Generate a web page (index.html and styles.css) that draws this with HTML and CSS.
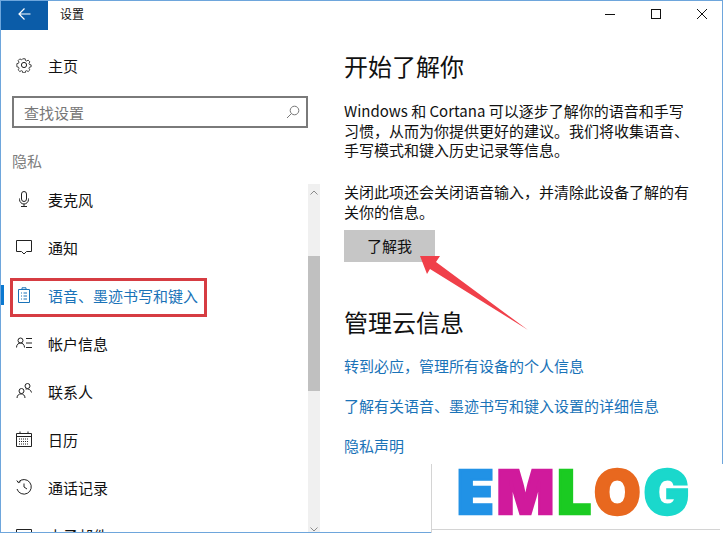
FILE: index.html
```html
<!DOCTYPE html>
<html lang="zh-CN">
<head>
    <meta charset="UTF-8">
    <title>设置</title>
    <link rel="stylesheet" href="styles.css">
</head>
<body>
    <div class="window">
        <div class="titlebar">
            <div class="back-btn">
                <svg width="16" height="14" viewBox="0 0 16 14"><path d="M13.5 7H2M7.5 1.5L2 7l5.5 5.5" fill="none" stroke="#fff" stroke-width="1.2"/></svg>
            </div>
            <span class="title-text">设置</span>
            <div class="win-controls">
                <svg width="12" height="12" viewBox="0 0 12 12"><path d="M1 6.5h10" stroke="#111" stroke-width="1"/></svg>
                <svg width="12" height="12" viewBox="0 0 12 12"><rect x="1.5" y="1.5" width="9" height="9" fill="none" stroke="#111" stroke-width="1"/></svg>
                <svg width="12" height="12" viewBox="0 0 12 12"><path d="M1 1l10 10M11 1L1 11" stroke="#111" stroke-width="1"/></svg>
            </div>
        </div>

        <div class="main">
            <div class="sidebar">
                <div class="home-row">
                    <svg class="icon" width="16" height="16" viewBox="0 0 16 16"><circle cx="8" cy="8" r="2.6" fill="none" stroke="#222"/><path d="M6.6.7h2.8l.4 2 1.3.6 1.8-1 2 2-1 1.8.5 1.3 2 .5v2.2l-2 .5-.5 1.3 1 1.8-2 2-1.8-1-1.3.5-.4 2H6.6l-.4-2-1.3-.5-1.8 1-2-2 1-1.8-.5-1.3-2-.5V6.4l2-.5.5-1.3-1-1.8 2-2 1.8 1 1.3-.6z" transform="translate(1.2 1.2) scale(.85)" fill="none" stroke="#222"/></svg>
                    <span>主页</span>
                </div>
                <div class="search-box">
                    <span>查找设置</span>
                    <svg width="14" height="14" viewBox="0 0 14 14"><circle cx="8.5" cy="5.5" r="4.3" fill="none" stroke="#777"/><path d="M5.5 8.5L1 13" stroke="#777"/></svg>
                </div>
                <div class="section-label">隐私</div>
                <div class="nav-wrap">
                    <ul class="nav">
                        <li>
                            <svg class="icon" width="16" height="16" viewBox="0 0 16 16"><rect x="5.5" y="0.5" width="5" height="10" rx="2.5" fill="none" stroke="#222"/><path d="M3.5 7.5v1a4.5 4.5 0 0 0 9 0v-1M8 13v2.5M5 15.500h6" fill="none" stroke="#222"/></svg>
                            <span>麦克风</span>
                        </li>
                        <li>
                            <svg class="icon" width="16" height="16" viewBox="0 0 16 16"><path d="M.5 1.500h15v11h-5L8 15l-2.500-2.500h-5z" fill="none" stroke="#222"/></svg>
                            <span>通知</span>
                        </li>
                        <li class="active">
                            <svg class="icon" width="16" height="16" viewBox="0 0 16 16"><path d="M2.500 2.500h11v13h-11zM6 2.500V.8h4v1.700" fill="none" stroke="#1a73b8"/><path d="M5 6h1M7.500 6H11M5 9h1M7.500 9H11M5 12h1M7.500 12H11" stroke="#1a73b8"/></svg>
                            <span>语音、墨迹书写和键入</span>
                        </li>
                        <li>
                            <svg class="icon" width="16" height="16" viewBox="0 0 16 16"><circle cx="4.500" cy="5.500" r="2.500" fill="none" stroke="#222"/><path d="M.5 12.500c0-6 8-6 8 0M10 3.500h6M10 8h6M10 12.500h6" fill="none" stroke="#222"/></svg>
                            <span>帐户信息</span>
                        </li>
                        <li>
                            <svg class="icon" width="16" height="16" viewBox="0 0 16 16"><circle cx="5.500" cy="8" r="2.500" fill="none" stroke="#222"/><path d="M1 15c0-5.500 8-5.500 8 0" fill="none" stroke="#222"/><circle cx="11.500" cy="3" r="2.500" fill="none" stroke="#222"/><path d="M9.500 6c2.500-.6 5.500.6 6 3.500" fill="none" stroke="#222"/></svg>
                            <span>联系人</span>
                        </li>
                        <li>
                            <svg class="icon" width="16" height="16" viewBox="0 0 16 16"><path d="M.5 2.500h15v13H.5zM.5 5.500h15M4 .5v2M12 .5v2" fill="none" stroke="#222"/><path d="M3 8h10M3 10.500h10M3 13h10" stroke="#222" stroke-dasharray="1 1"/></svg>
                            <span>日历</span>
                        </li>
                        <li>
                            <svg class="icon" width="16" height="16" viewBox="0 0 16 16"><path d="M2.500 3A7.300 7.300 0 1 1 1 10M.8 1.500l1.500 2.200 2.300-1M8 4.500V8l3 2" fill="none" stroke="#222"/></svg>
                            <span>通话记录</span>
                        </li>
                        <li>
                            <svg class="icon" width="16" height="16" viewBox="0 0 16 16"><path d="M.5 2.500h15v11H.5z" fill="none" stroke="#222"/></svg>
                            <span>电子邮件</span>
                        </li>
                    </ul>
                    <div class="scrollbar">
                        <svg class="scroll-up" width="8" height="5" viewBox="0 0 8 5"><path d="M.5 4.500L4 1l3.500 3.500" fill="none" stroke="#8a8a8a"/></svg>
                        <div class="scroll-thumb"></div>
                        <svg class="scroll-down" width="8" height="5" viewBox="0 0 8 5"><path d="M.5.5L4 4 7.500.5" fill="none" stroke="#8a8a8a"/></svg>
                    </div>
                </div>
            </div>

            <div class="content">
                <h2>开始了解你</h2>
                <p class="intro">Windows 和 Cortana 可以逐步了解你的语音和手写习惯，从而为你提供更好的建议。我们将收集语音、手写模式和键入历史记录等信息。</p>
                <p class="note">关闭此项还会关闭语音输入，并清除此设备了解的有关你的信息。</p>
                <button class="know-btn">了解我</button>
                <h2 class="cloud-title">管理云信息</h2>
                <a class="link">转到必应，管理所有设备的个人信息</a>
                <a class="link">了解有关语音、墨迹书写和键入设置的详细信息</a>
                <a class="link">隐私声明</a>
            </div>
        </div>
    </div>

    <!-- annotations on top of the screenshot -->
    <div class="red-box"></div>
    <svg class="arrow" width="120" height="85" viewBox="0 0 120 85"><polygon points="2,2 22,2 18,8 110,76 12,15 9,20" fill="#f0404a"/></svg>
    <div class="logo">
        <span class="l-e">E</span><span class="l-m">M</span><span class="l-l">L</span><span class="l-o">O</span><span class="l-g">G</span>
    </div>
</body>
</html>
```

FILE: styles.css
```css
* { box-sizing: border-box; }
html, body { margin: 0; height: 100%; overflow: hidden; }
body { font-family: "Noto Sans CJK SC", "Liberation Sans", sans-serif; background: #fff; color: #111; }

.window { width: 723px; height: 533px; border: 1px solid #6ea6dc; display: flex; flex-direction: column; overflow: hidden; }

/* title bar */
.titlebar { height: 29px; display: flex; align-items: center; flex-shrink: 0; }
.back-btn { width: 47px; height: 29px; background: #0b5ca8; display: flex; align-items: center; justify-content: center; padding-bottom: 3px; }
.title-text { font-size: 12px; margin-left: 12px; padding-bottom: 5px; }
.win-controls { margin-left: auto; display: flex; gap: 34px; padding: 0 14px 4px 0; align-items: center; }
.win-controls svg { display: block; }

.main { flex: 1; display: flex; min-height: 0; }

/* left side */
.sidebar { width: 319px; flex-shrink: 0; display: flex; flex-direction: column; min-height: 0; }
.home-row { height: 48px; margin-top: 11px; display: flex; align-items: center; font-size: 15px; padding-left: 15px; flex-shrink: 0; }
.icon { flex-shrink: 0; margin-right: 16px; }
.search-box { margin: 7px 0 0 11px; width: 296px; height: 32px; border: 2px solid #7a7a7a; display: flex; align-items: center; justify-content: space-between; padding: 0 6px 0 10px; font-size: 15px; color: #777; flex-shrink: 0; }
.section-label { margin: 22px 0 0 11px; font-size: 15px; line-height: 22px; color: #7d7d7d; flex-shrink: 0; }
.nav-wrap { flex: 1; display: flex; margin-top: 3px; min-height: 0; }
.nav { list-style: none; margin: 0; padding: 0; width: 307px; overflow: hidden; }
.nav li { height: 48px; display: flex; align-items: center; font-size: 15px; padding-left: 15px; position: relative; }
.nav li.active { color: #1a73b8; }
.nav li.active::before { content: ""; position: absolute; left: 0; top: 14px; width: 3px; height: 20px; background: #0b78d0; }

.scrollbar { width: 12px; margin-top: 9px; background: #f0f0f0; display: flex; flex-direction: column; align-items: center; }
.scroll-up { margin-top: 6px; flex-shrink: 0; }
.scroll-thumb { width: 12px; height: 135px; margin-top: 61px; background: #c0c0c0; flex-shrink: 0; }
.scroll-down { margin-top: auto; flex-shrink: 0; }

/* right side */
.content { flex: 1; padding: 19px 24px 0 24px; }
.content h2 { font-size: 24px; font-weight: 400; line-height: 34px; margin: 0; }
.intro { font-size: 15px; line-height: 19.5px; margin: 18px 0 0; }
.note { font-size: 15px; line-height: 20px; margin: 22px 0 0; }
.know-btn { display: block; width: 91px; height: 32px; margin-top: 8px; border: 0; background: #c6c6c6; font-family: inherit; font-size: 15px; color: #111; padding: 0; }
.cloud-title { margin-top: 43px !important; }
.link { display: block; font-size: 15px; line-height: 20px; color: #1a73b8; margin-bottom: 20px; }
.cloud-title + .link { margin-top: 17px; }

/* annotations */
.red-box { position: absolute; left: 10px; top: 278px; width: 197px; height: 39px; border: 3px solid #d63c42; }
.arrow { position: absolute; left: 418px; top: 254px; }
.logo { position: absolute; left: 431px; top: 464px; width: 292px; height: 69px; background: #fff; border-left: 1px solid #d4d4d4; display: flex; padding-left: 25px; font-family: Inter, "Liberation Sans", sans-serif; font-weight: 900; font-size: 60px; line-height: 56px; letter-spacing: 3px; -webkit-text-stroke: 2.5px currentColor; }
.logo::after { content: ""; position: absolute; left: 0; right: 3px; top: 65px; height: 1px; background: #d4d4d4; }
.l-e { color: #2192e6; }
.l-m { color: #d01a9c; }
.l-l { color: #1bcb22; }
.l-o { color: #e8681f; }
.l-g { color: #1ad8cc; }
```
